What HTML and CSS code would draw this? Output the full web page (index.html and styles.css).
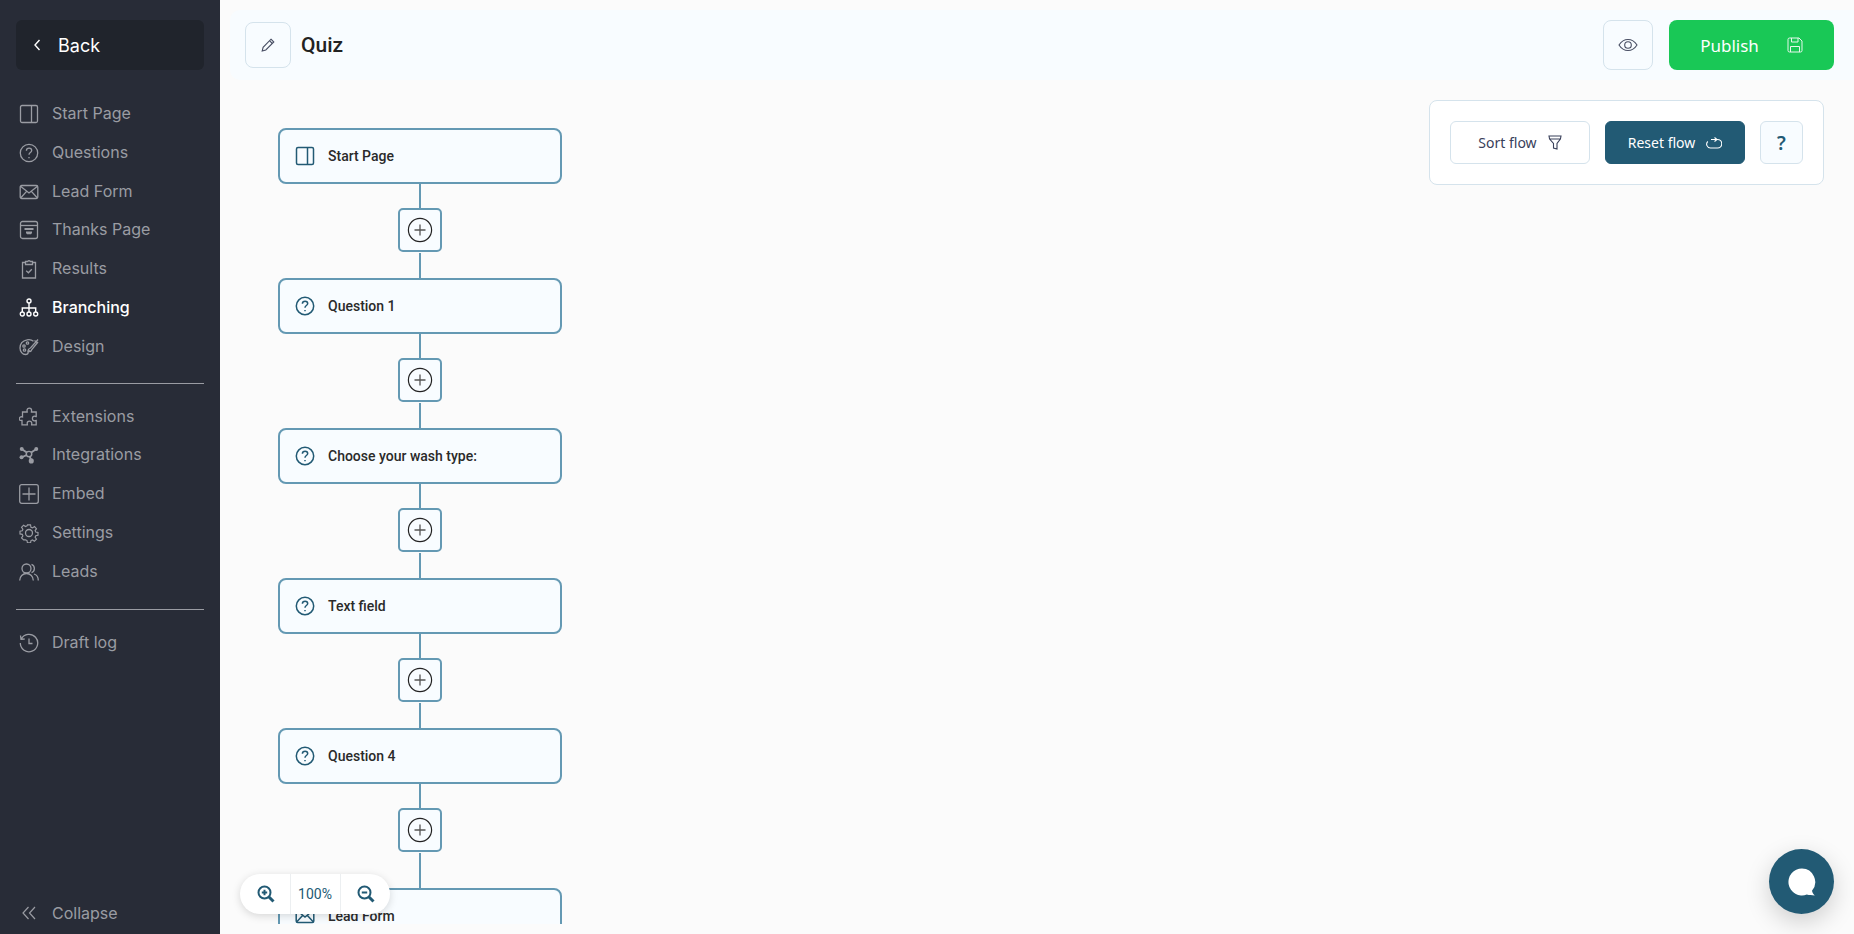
FILE: index.html
```html
<!doctype html>
<html lang="en-US">
	<head>
		<title>Quiz - Branching</title>
		<meta charset="UTF-8">
		<link rel="stylesheet" href="styles.css">
	</head>

	<body>
		<svg class="sprites" width="0" height="0">
			<symbol id="i-page" viewBox="0 0 20 20"><rect x="1.5" y="1.5" width="17" height="17" rx="1.5"/><path d="M12.5 1.5v17"/></symbol>
			<symbol id="i-question" viewBox="0 0 20 20"><circle cx="10" cy="10" r="8.7"/><path d="M7.4 7.7c0-1.6 1.2-2.5 2.7-2.5s2.6.9 2.6 2.3c0 2-2.7 2-2.7 4.2"/><path d="M10 14v1.200"/></symbol>
			<symbol id="i-mail" viewBox="0 0 20 20"><rect x="1.2" y="3.5" width="17.6" height="13" rx="1.5"/><path d="M1.5 4.2 10 11l8.5-6.8M1.6 16l6-6.6M18.4 16l-6-6.6"/></symbol>
			<symbol id="i-plus" viewBox="0 0 26 26"><circle cx="13" cy="13" r="11.6" class="plus-ring"/><path d="M13 7.5v11M7.5 13h11" class="plus-cross"/></symbol>
		</svg>

		<div class="app">
			<aside class="sidebar">
				<a class="back-btn">
					<svg class="back-arrow" viewBox="0 0 10 14"><path d="M7.5 2 3 7l4.5 5"/></svg>
					<span>Back</span>
				</a>

				<ul class="nav-list nav-first">
					<li><svg class="nav-icon"><use href="#i-page"/></svg>Start Page</li>
					<li><svg class="nav-icon"><use href="#i-question"/></svg>Questions</li>
					<li><svg class="nav-icon"><use href="#i-mail"/></svg>Lead Form</li>
					<li>
						<svg class="nav-icon" viewBox="0 0 20 20"><rect x="1.5" y="1.5" width="17" height="17" rx="2"/><path d="M1.5 5.500h17"/><path class="solid" d="M5.500 8h9v2h-9zM7 11.500h6v1.500l-1 1.200H8L7 13z"/></svg>
						Thanks Page
					</li>
					<li>
						<svg class="nav-icon" viewBox="0 0 20 20"><path d="M6.500 3.500H3.500v15.500h13V3.500h-3"/><path d="M6.500 2.500h2.300a1.300 1.300 0 0 1 2.400 0h2.300v3h-7z"/><path d="m7.200 11.800 2.200 2 3.400-3.600"/></svg>
						Results
					</li>
					<li class="active">
						<svg class="nav-icon nav-icon-strong" viewBox="0 0 20 20"><circle cx="10" cy="3" r="2"/><path d="M10 5v5M3.300 14v-4h13.400v4M10 10v4"/><circle cx="3.300" cy="16" r="2"/><circle cx="10" cy="16" r="2"/><circle cx="16.700" cy="16" r="2"/></svg>
						Branching
					</li>
					<li>
						<svg class="nav-icon" viewBox="0 0 20 20"><path d="M14.500 4.200C12.800 2.800 10.500 2.200 8 2.800 3.800 3.700 1 7 1 11c0 3.500 2.500 6.500 5.500 6.500 2 0 2.600-1 2.600-2 0-1.400 1.200-1.600 2-1.800"/><circle cx="5" cy="9" r="1.200"/><circle cx="8.500" cy="6" r="1.200"/><circle cx="5.500" cy="13" r="1.200"/><path d="M19 2.500 11.500 11c-1.500.5-2.500 2-2.500 3.500 2 .5 3.500-.5 4-2.200l6-7.300M15.500 3.500l3 2.500"/></svg>
						Design
					</li>
				</ul>

				<hr class="nav-rule nav-rule-first">

				<ul class="nav-list">
					<li>
						<svg class="nav-icon" viewBox="0 0 20 20"><path d="M8 3.500C8 2 9 1.200 10.300 1.200s2.300.9 2.300 2.300c0 .6-.2 1-.2 1.500h4.800v4.500c-.6 0-1-.3-1.600-.3-1.300 0-2.200 1-2.200 2.300s.9 2.300 2.200 2.300c.6 0 1-.3 1.600-.3v4.300h-4.600c0-.6.200-1 .2-1.500 0-1.300-1-2.200-2.300-2.200s-2.300.9-2.300 2.200c0 .5.200 1 .2 1.500H3v-4.500c-.5 0-1 .3-1.500.1C.5 13.300 0 12.300.5 11c.4-1.200 1.800-1.500 3-1V5h4.700c0-.5-.2-1-.2-1.500z"/></svg>
						Extensions
					</li>
					<li>
						<svg class="nav-icon" viewBox="0 0 22 20"><path class="thick" d="M3 3.500 11 9l8-5.500M3 12.500 11 9l2.500 7.500"/><circle class="hub" cx="11" cy="9" r="3"/><circle class="solid" cx="3" cy="3.300" r="2.200"/><circle class="solid" cx="19" cy="3.300" r="2.200"/><circle class="solid" cx="2.800" cy="12.500" r="2.200"/><circle class="solid" cx="13.500" cy="16.500" r="2.800"/></svg>
						Integrations
					</li>
					<li>
						<svg class="nav-icon" viewBox="0 0 20 20"><rect x=".7" y=".7" width="18.600" height="18.600" rx="2"/><path d="M10 3.500v13M3.500 10h13"/></svg>
						Embed
					</li>
					<li>
						<svg class="nav-icon" viewBox="0 0 20 20"><circle cx="10" cy="10" r="3.500"/><path d="M8.300 1h3.400l.5 2.600 1.700.7 2.200-1.500 2.200 2.400-1.500 2.100.7 1.700 2.500.5v3l-2.500.5-.7 1.700 1.500 2.200-2.300 2.300-2.100-1.500-1.700.7-.5 2.600H8.300l-.5-2.600-1.700-.7L4 17.700l-2.300-2.300 1.500-2.200-.7-1.700-2.500-.5v-3l2.500-.5.7-1.700-1.500-2.100L4 1.300 6.100 2.800l1.700-.7z" transform="translate(1 1) scale(.9)"/></svg>
						Settings
					</li>
					<li>
						<svg class="nav-icon" viewBox="0 0 20 20"><circle cx="7.500" cy="6.500" r="4.500"/><path d="M.7 18.500c0-4 3-7 6.800-7s6.800 3 6.800 7M12.500 2.300a4.500 4.500 0 0 1 0 8.400M15 12c2.600.8 4.300 3.400 4.300 6.500"/></svg>
						Leads
					</li>
				</ul>

				<hr class="nav-rule nav-rule-last">

				<ul class="nav-list">
					<li>
						<svg class="nav-icon" viewBox="0 0 20 20"><path d="M2.300 6a8.700 8.700 0 1 1-1 4M1.500 2.500 2 6.300l3.700-.3"/><path d="M10 5.500V10.500h3.500"/></svg>
						Draft log
					</li>
				</ul>

				<a class="collapse-link">
					<svg class="collapse-arrows" viewBox="0 0 14 14"><path d="M6.500 1 1 7l5.500 6M13 1 7.500 7l5.500 6"/></svg>
					Collapse
				</a>
			</aside>

			<main class="main">
				<header class="topbar">
					<button type="button" class="icon-btn edit-btn">
						<svg class="btn-icon" viewBox="0 0 16 16"><path d="M11 2.200 13.800 5l-8 8-3.600 1 .9-3.700zM9.500 3.700l2.800 2.800"/></svg>
					</button>
					<h1>Quiz</h1>
					<button type="button" class="icon-btn eye-btn">
						<svg class="eye-icon" viewBox="0 0 20 14"><path d="M1 7c2.300-3.600 5.300-5.500 9-5.500S16.700 3.400 19 7c-2.300 3.600-5.300 5.500-9 5.500S3.300 10.600 1 7z"/><circle cx="10" cy="7" r="3.300"/></svg>
					</button>
					<button type="button" class="publish-btn">
						Publish
						<svg class="save-icon" viewBox="0 0 16 16"><path d="M1 2.500A1.500 1.500 0 0 1 2.500 1H12l3 3v9.500a1.500 1.500 0 0 1-1.500 1.500h-11A1.500 1.500 0 0 1 1 13.500z"/><path d="M4.500 1v4h6.500V1M3.500 15V9.500h9V15"/></svg>
					</button>
				</header>

				<section class="canvas">
					<div class="flow">
						<div class="node"><svg class="node-icon"><use href="#i-page"/></svg>Start Page</div>
						<div class="link"></div>
						<div class="add"><svg class="add-icon"><use href="#i-plus"/></svg></div>
						<div class="link"></div>
						<div class="node"><svg class="node-icon"><use href="#i-question"/></svg>Question 1</div>
						<div class="link"></div>
						<div class="add"><svg class="add-icon"><use href="#i-plus"/></svg></div>
						<div class="link"></div>
						<div class="node"><svg class="node-icon"><use href="#i-question"/></svg>Choose your wash type:</div>
						<div class="link"></div>
						<div class="add"><svg class="add-icon"><use href="#i-plus"/></svg></div>
						<div class="link"></div>
						<div class="node"><svg class="node-icon"><use href="#i-question"/></svg>Text field</div>
						<div class="link"></div>
						<div class="add"><svg class="add-icon"><use href="#i-plus"/></svg></div>
						<div class="link"></div>
						<div class="node"><svg class="node-icon"><use href="#i-question"/></svg>Question 4</div>
						<div class="link"></div>
						<div class="add"><svg class="add-icon"><use href="#i-plus"/></svg></div>
						<div class="link link-long"></div>
						<div class="node"><svg class="node-icon"><use href="#i-mail"/></svg>Lead Form</div>
					</div>

					<div class="flow-tools">
						<button type="button" class="tool-btn">
							Sort flow
							<svg class="tool-icon tool-funnel" viewBox="0 0 14 15"><path d="M1 1h12l-.6 3L9 8.500V14l-3.500-1V8.500L1.600 4zM1.600 4h10.800"/></svg>
						</button>
						<button type="button" class="tool-btn tool-btn-dark">
							Reset flow
							<svg class="tool-icon tool-reset" viewBox="0 0 16 12"><path d="M1.800 4.500A3.800 3.800 0 0 0 4.500 11h7a4.200 4.200 0 0 0 0-8.500H5M8.500.5l2.500 2-2.500 2"/></svg>
						</button>
						<button type="button" class="help-btn">?</button>
					</div>

					<div class="zoom-box">
						<span class="zoom-cell zoom-tool">
							<svg class="zoom-icon" viewBox="0 0 18 18"><circle cx="7.500" cy="7.500" r="6"/><path class="thick" d="M12 12l4.500 4.500"/><path d="M7.500 4.800v5.400M4.800 7.500h5.400"/></svg>
						</span>
						<span class="zoom-cell zoom-value">100%</span>
						<span class="zoom-cell zoom-tool">
							<svg class="zoom-icon" viewBox="0 0 18 18"><circle cx="7.500" cy="7.500" r="6"/><path class="thick" d="M12 12l4.500 4.500"/><path d="M4.800 7.500h5.400"/></svg>
						</span>
					</div>
				</section>
			</main>
		</div>

		<button type="button" class="chat-btn">
			<svg viewBox="0 0 30 30"><path d="M15 1.500a13.500 13.500 0 1 0 4.800 26.100c2.500.6 5 .9 8 .9-1.400-1.200-2.300-2.900-2.800-4.800A13.500 13.500 0 0 0 15 1.500z"/></svg>
		</button>
	</body>
</html>
```

FILE: styles.css
```css
* {
	padding: 0;
	margin: 0;
	box-sizing: border-box;
}

html, body {
	height: 100%;
	overflow: hidden;
}

body {
	font-family: Roboto, sans-serif;
	background: #fbfbfb;
	color: #222;
}

.sprites {
	position: absolute;
}

.app {
	display: flex;
	height: 934px;
}


/* sidebar */

.sidebar {
	width: 220px;
	flex-shrink: 0;
	display: flex;
	flex-direction: column;
	padding: 20px 16px 0;
	background: #282c37;
	color: #9a9ca3;
	font-family: Inter, sans-serif;
}

.back-btn {
	display: flex;
	align-items: center;
	height: 50px;
	padding-left: 16px;
	border-radius: 6px;
	background: #20242c;
	color: #fff;
	font-size: 18px;
}

.back-arrow {
	width: 10px;
	height: 14px;
	margin-right: 16px;
	fill: none;
	stroke: #fff;
	stroke-width: 1.4;
}

.nav-list {
	list-style: none;
}

.nav-first {
	margin-top: 23.6px;
}

.nav-list li {
	display: flex;
	align-items: center;
	height: 38.8px;
	font-size: 16px;
}

.nav-list li.active {
	color: #fff;
	font-weight: 500;
}

.nav-icon {
	width: 20px;
	height: 20px;
	margin: 2px 13px 0 3px;
	flex-shrink: 0;
	fill: none;
	stroke: currentColor;
	stroke-width: 1.3;
}

.nav-icon-strong {
	stroke-width: 1.4;
}

.nav-icon .solid {
	fill: currentColor;
	stroke: none;
}

.nav-icon .thick {
	stroke-width: 2;
}

.nav-icon .hub {
	fill: #282c37;
	stroke-width: 1.6;
}

.nav-rule {
	height: 1px;
	border: 0;
	background: #9a9ca3;
}

.nav-rule-first {
	margin: 18px 0 12px;
}

.nav-rule-last {
	margin: 19px 0 12px;
}


.collapse-link {
	display: flex;
	align-items: center;
	margin-top: auto;
	height: 40px;
	margin-bottom: 1px;
	padding-left: 6px;
	font-size: 16px;
}

.collapse-arrows {
	width: 14px;
	height: 14px;
	margin-right: 16px;
	fill: none;
	stroke: currentColor;
	stroke-width: 1.2;
}


/* top bar */

.main {
	flex: 1;
	display: flex;
	flex-direction: column;
	min-width: 0;
}

.topbar {
	display: flex;
	align-items: center;
	height: 70px;
	margin: 10px 0 0 10px;
	padding: 0 20px 0 15px;
	background: #f8fcff;
	border-radius: 10px 0 0 10px;
}

.topbar h1 {
	flex: 1;
	margin-left: 10px;
	font-size: 21px;
	font-weight: 500;
	color: #222;
}

.icon-btn {
	display: flex;
	align-items: center;
	justify-content: center;
	background: #f8fcff;
	border: 1px solid #d5e3ec;
	border-radius: 8px;
}

.edit-btn {
	width: 46px;
	height: 46px;
}

.btn-icon {
	width: 16px;
	height: 16px;
	fill: none;
	stroke: #484e63;
	stroke-width: 1.1;
}

.eye-btn {
	width: 50px;
	height: 50px;
	margin-right: 16px;
}

.eye-icon {
	width: 20px;
	height: 14px;
	fill: none;
	stroke: #484e63;
	stroke-width: 1.1;
}

.publish-btn {
	display: flex;
	align-items: center;
	justify-content: center;
	gap: 28px;
	width: 165px;
	height: 50px;
	border: 0;
	border-radius: 8px;
	background: #19c856;
	color: #fff;
	font-family: "Noto Sans", sans-serif;
	font-size: 17px;
}

.save-icon {
	width: 16px;
	height: 16px;
	fill: none;
	stroke: #e6f8ec;
	stroke-width: 1;
}


/* flow */

.canvas {
	flex: 1;
	position: relative;
}

.flow {
	display: flex;
	flex-direction: column;
	align-items: center;
	width: 284px;
	height: 796px;
	margin: 48px 0 0 58px;
	overflow: hidden;
}

.node {
	flex-shrink: 0;
	display: flex;
	align-items: center;
	width: 284px;
	height: 56px;
	padding-left: 15px;
	background: #f8fcff;
	border: 2px solid #6499b3;
	border-radius: 8px;
	font-size: 14px;
	font-weight: 500;
	color: #2a2a2a;
}

.node-icon {
	width: 20px;
	height: 20px;
	margin-right: 13px;
	fill: none;
	stroke: #225a74;
	stroke-width: 1.5;
}

.link {
	flex-shrink: 0;
	width: 2px;
	height: 25px;
	background: #6499b3;
}

.link-long {
	height: 35px;
}

.add {
	flex-shrink: 0;
	display: flex;
	align-items: center;
	justify-content: center;
	width: 44px;
	height: 44px;
	margin: -1px 0 1px;
	background: #f8fcff;
	border: 2px solid #6499b3;
	border-radius: 5px;
}

.add-icon {
	width: 26px;
	height: 26px;
	fill: none;
}

.plus-ring {
	stroke: #222;
	stroke-width: 1.2;
}

.plus-cross {
	stroke: #555;
	stroke-width: 1.3;
}


/* floating tools */

.flow-tools {
	position: absolute;
	top: 20px;
	right: 30px;
	display: flex;
	align-items: center;
	gap: 15px;
	width: 395px;
	height: 85px;
	padding-left: 20px;
	background: #fff;
	border: 1px solid #d5e3ec;
	border-radius: 8px;
}

.tool-btn {
	display: flex;
	align-items: center;
	justify-content: center;
	gap: 11px;
	width: 140px;
	height: 43px;
	background: #fff;
	border: 1px solid #d5e3ec;
	border-radius: 6px;
	color: #39405a;
	font-family: "Noto Sans", sans-serif;
	font-size: 14px;
}

.tool-btn-dark {
	background: #225a74;
	border-color: #225a74;
	color: #fff;
}

.tool-icon {
	fill: none;
	stroke: currentColor;
	stroke-width: 1.1;
}

.tool-funnel {
	width: 14px;
	height: 15px;
}

.tool-reset {
	width: 16px;
	height: 12px;
}

.help-btn {
	width: 43px;
	height: 43px;
	background: #f8fcff;
	border: 1px solid #d5e3ec;
	border-radius: 6px;
	color: #225a74;
	font-family: "Noto Sans", sans-serif;
	font-size: 19px;
	font-weight: 600;
}

.zoom-box {
	position: absolute;
	left: 20px;
	bottom: 20px;
	display: flex;
	height: 40px;
	width: 150px;
	background: #fff;
	border-radius: 20px;
	box-shadow: 0 2px 8px rgba(0, 0, 0, 0.15);
	overflow: hidden;
}

.zoom-cell {
	flex: 1;
	display: flex;
	align-items: center;
	justify-content: center;
}

.zoom-tool {
	padding-left: 2px;
}

.zoom-value {
	flex: none;
	width: 51px;
	border-left: 1px solid #eceff1;
	border-right: 1px solid #eceff1;
	font-size: 14px;
	color: #225a74;
}

.zoom-icon {
	width: 18px;
	height: 18px;
	fill: none;
	stroke: #225a74;
	stroke-width: 2;
}

.zoom-icon .thick {
	stroke-width: 3;
}

.chat-btn {
	position: fixed;
	right: 20px;
	bottom: 20px;
	display: flex;
	align-items: center;
	justify-content: center;
	width: 65px;
	height: 65px;
	background: #225a74;
	border: 0;
	border-radius: 50%;
	box-shadow: 0 8px 24px rgba(0, 0, 0, 0.18);
}

.chat-btn svg {
	width: 30px;
	height: 30px;
	fill: #fff;
}
```
